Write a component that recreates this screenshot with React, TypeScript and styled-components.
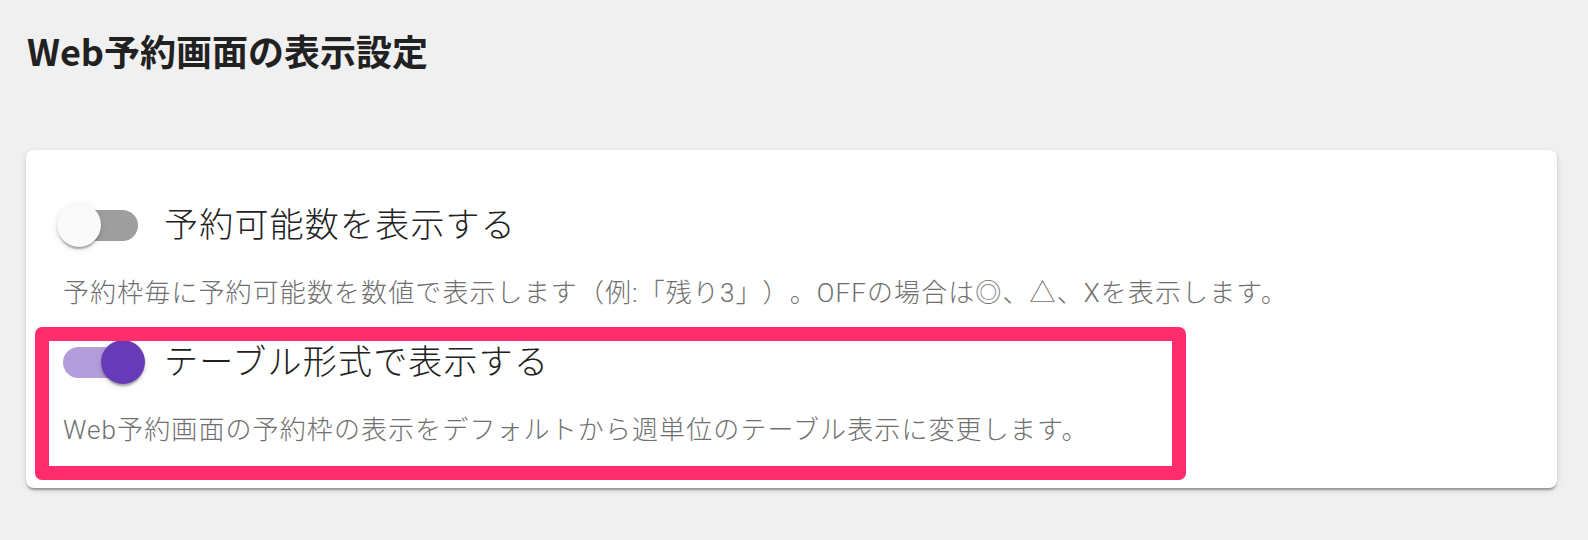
import React from "react";
import styled, { createGlobalStyle } from "styled-components";

const GlobalStyle = createGlobalStyle`
  html, body {
    margin: 0;
    padding: 0;
    background: #f0f0f0;
  }
  body {
    font-family: Roboto, "Noto Sans CJK JP", sans-serif;
    text-spacing-trim: space-all;
  }
`;

const Page = styled.div`
  width: 1588px;
  height: 540px;
  box-sizing: border-box;
  padding: 28px 31px 0 26px;
  display: flex;
  flex-direction: column;
`;

const Title = styled.h1`
  margin: 0 0 0 1px;
  font-family: "Noto Sans CJK JP", sans-serif;
  font-weight: 700;
  font-size: 36px;
  line-height: 44px;
  color: #212121;
`;

const Card = styled.section`
  position: relative;
  margin-top: 78px;
  background: #ffffff;
  border-radius: 8px;
  box-shadow: 0 4px 2px -2px rgba(0, 0, 0, 0.2), 0 2px 2px 0 rgba(0, 0, 0, 0.14),
    0 2px 6px 0 rgba(0, 0, 0, 0.12);
  padding: 44px 0 38px 31px;
  display: flex;
  flex-direction: column;
`;

const Setting = styled.div`
  display: flex;
  flex-direction: column;
  & + & {
    margin-top: 18px;
  }
`;

const Row = styled.label`
  display: flex;
  align-items: center;
  height: 62px;
  gap: 19px;
`;

const SwitchBox = styled.span`
  position: relative;
  display: flex;
  align-items: center;
  width: 88px;
  height: 44px;
  flex-shrink: 0;
`;

const Track = styled.span<{ $on: boolean }>`
  display: block;
  margin: 0 7px 0 6px;
  flex: 1;
  height: 31px;
  border-radius: 16px;
  background: ${(p) => (p.$on ? "#b39ddb" : "#9e9e9e")};
`;

const Thumb = styled.span<{ $on: boolean }>`
  position: absolute;
  top: 0;
  left: ${(p) => (p.$on ? "44px" : "0")};
  width: 44px;
  height: 44px;
  border-radius: 50%;
  background: ${(p) => (p.$on ? "#673ab7" : "#fafafa")};
  box-shadow: 0 4px 2px -2px rgba(0, 0, 0, 0.2), 0 2px 2px 0 rgba(0, 0, 0, 0.14),
    0 2px 6px 0 rgba(0, 0, 0, 0.12);
`;

const Label = styled.span`
  font-size: 34px;
  font-weight: 300;
  letter-spacing: 1.2px;
  color: #212121;
  line-height: 1.2;
`;

const Description = styled.p`
  margin: 17px 0 0 6px;
  font-size: 26px;
  font-weight: 300;
  letter-spacing: 1.1px;
  line-height: 40px;
  color: #6f6f6f;
`;

const Highlight = styled.div`
  position: absolute;
  left: 9px;
  top: 177px;
  width: 1151px;
  height: 153px;
  box-sizing: border-box;
  border: 14px solid #ff2d6e;
  border-radius: 7px;
  pointer-events: none;
`;

type SwitchProps = { on: boolean };

const Switch: React.FC<SwitchProps> = ({ on }) => (
  <SwitchBox>
    <Track $on={on} />
    <Thumb $on={on} />
  </SwitchBox>
);

const settings = [
  {
    on: false,
    label: "予約可能数を表示する",
    description:
      "予約枠毎に予約可能数を数値で表示します（例:「残り3」）。OFFの場合は◎、△、Xを表示します。",
  },
  {
    on: true,
    label: "テーブル形式で表示する",
    description:
      "Web予約画面の予約枠の表示をデフォルトから週単位のテーブル表示に変更します。",
  },
];

export default function App() {
  return (
    <>
      <GlobalStyle />
      <Page>
        <Title>Web予約画面の表示設定</Title>
        <Card>
          {settings.map((s) => (
            <Setting key={s.label}>
              <Row>
                <Switch on={s.on} />
                <Label>{s.label}</Label>
              </Row>
              <Description>{s.description}</Description>
            </Setting>
          ))}
          <Highlight />
        </Card>
      </Page>
    </>
  );
}
